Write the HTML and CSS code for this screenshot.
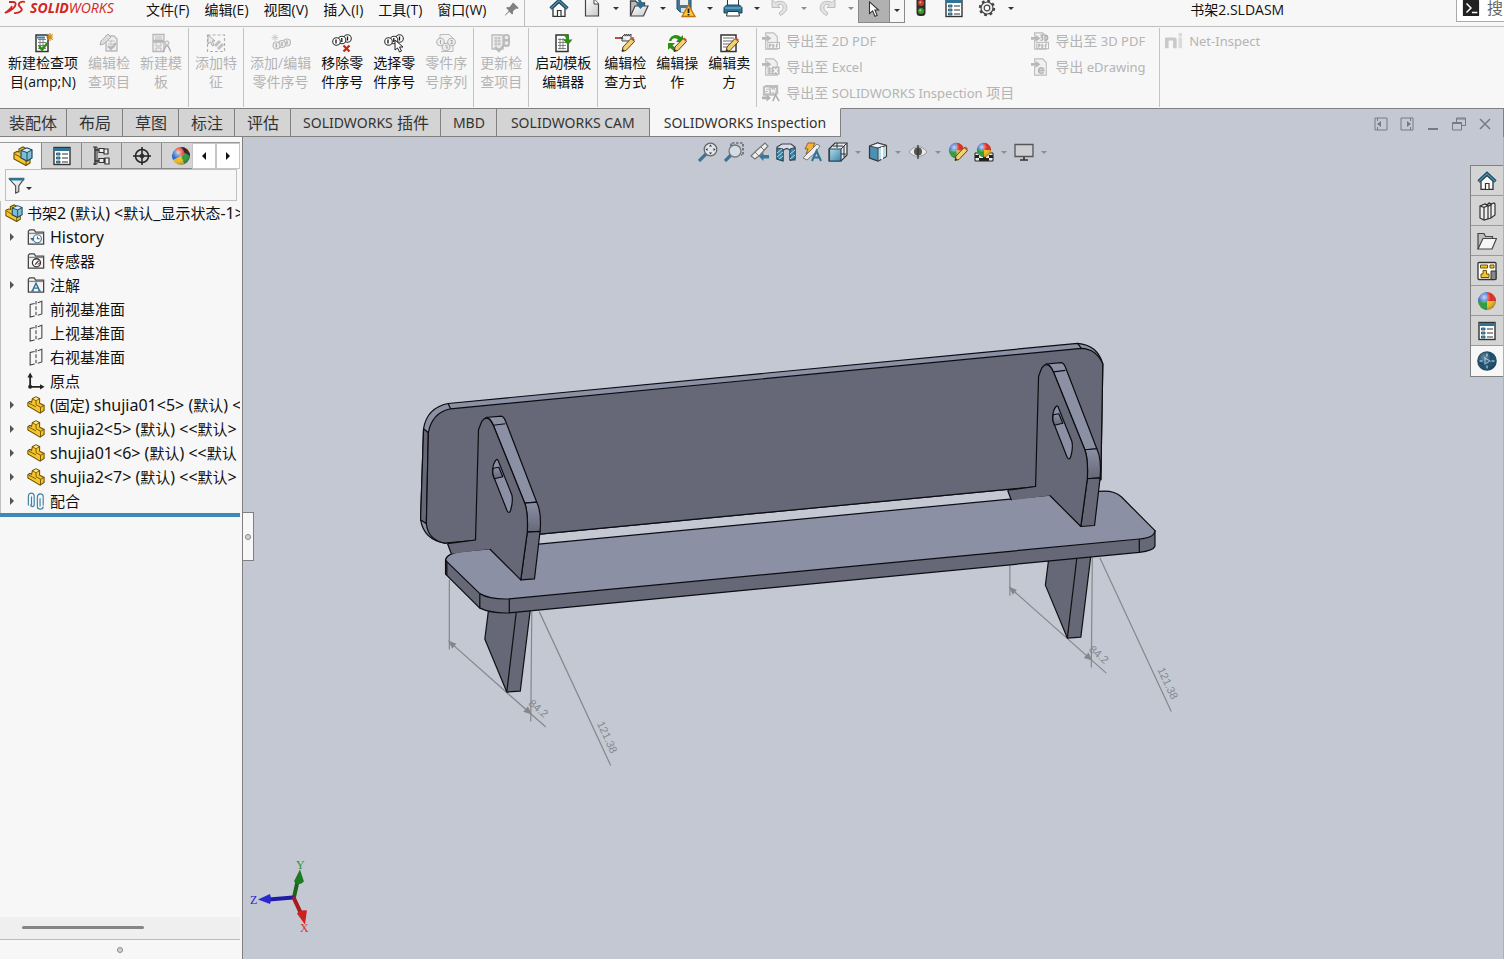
FILE: index.html
```html
<!DOCTYPE html>
<html lang="zh-CN">
<head>
    <meta charset="UTF-8">
    <title>书架2.SLDASM</title>
    <link rel="stylesheet" href="styles.css">
</head>
<body>
    <!-- icon sprite -->
    <svg class="sprite" aria-hidden="true">
        <defs>
            <linearGradient id="steel" x1="0" y1="0" x2="0" y2="1">
                <stop offset="0" stop-color="#8c90a5"/><stop offset="1" stop-color="#666877"/>
            </linearGradient>
            <linearGradient id="blue" x1="0" y1="0" x2="1" y2="1">
                <stop offset="0" stop-color="#b5dcea"/><stop offset="1" stop-color="#3c83a8"/>
            </linearGradient>
            <linearGradient id="paper" x1="0" y1="0" x2="1" y2="1">
                <stop offset="0" stop-color="#fff"/><stop offset="1" stop-color="#c9c9c9"/>
            </linearGradient>
            <radialGradient id="shine" cx=".35" cy=".3" r=".75">
                <stop offset="0" stop-color="#fff" stop-opacity=".75"/><stop offset=".5" stop-color="#fff" stop-opacity="0"/><stop offset="1" stop-color="#000" stop-opacity=".35"/>
            </radialGradient>
        </defs>
        <symbol id="i-home" viewBox="0 0 20 20">
            <path d="M4 10v8.300h12V10l-6-5.500z" fill="#fafafa" stroke="#333" stroke-width="1.300"/>
            <path d="M8.500 18v-5.500h3.500V18" fill="#fff" stroke="#333" stroke-width="1.200"/>
            <path d="M1.500 10.500L10 2.500l8.500 8" fill="none" stroke="#1c4a62" stroke-width="3.200"/>
            <path d="M2 10.300L10 2.800l8 7.500" fill="none" stroke="#4c94b5" stroke-width="1.200"/>
        </symbol>
        <symbol id="i-new" viewBox="0 0 20 20">
            <path d="M3.500 1h8.500l4.500 5v12h-13z" fill="url(#paper)" stroke="#444" stroke-width="1.200"/>
            <path d="M12 1v5h4.500" fill="#fff" stroke="#444"/>
        </symbol>
        <symbol id="i-open" viewBox="0 0 20 20">
            <path d="M1.500 18V3h5l2 2h7v3" fill="#bbb" stroke="#444" stroke-width="1.300"/>
            <path d="M1.500 18L6 8h13l-4.500 10z" fill="url(#paper)" stroke="#444" stroke-width="1.200"/>
            <path d="M8 1c4 0 5 2 5 5h3l-4.500 5L7 6h3c0-2-.5-3-2-5z" fill="#2b6f92"/>
        </symbol>
        <symbol id="i-save" viewBox="0 0 20 20">
            <path d="M1 1h14v13H4l-3-3z" fill="#41799a" stroke="#234a60"/>
            <path d="M4 1h8v6H4z" fill="#eee"/><path d="M5 10h7v4H5z" fill="#ddd"/>
            <path d="M12.500 7L19 18.500H6z" fill="#ffc83a" stroke="#c36f0b" stroke-width="1.300"/>
            <path d="M12.500 10.500v4.500M12.500 16v1.500" stroke="#222" stroke-width="1.800"/>
        </symbol>
        <symbol id="i-print" viewBox="0 0 20 20">
            <path d="M4.500 1h11v8h-11z" fill="#fff" stroke="#333"/>
            <path d="M1 9.500L3.500 7h13L19 9.500V15H1z" fill="#2f7396" stroke="#1c4a62"/>
            <path d="M2 10h16" stroke="#86bdd4"/>
            <path d="M4.500 13.500h11l1 4.500h-13z" fill="#fff" stroke="#333"/>
        </symbol>
        <symbol id="i-undo" viewBox="0 0 20 20">
            <path d="M2 1.500v8h8L7.500 7c4-2 7 1 5 4.500-.8 1.500-2 2.500-3.500 3.500l1.500 2.500C17 14 18 10 16 6.500S9 2.500 5 4.500z" fill="#e2e2e2" stroke="#bdbdbd"/>
        </symbol>
        <symbol id="i-cursor" viewBox="0 0 20 20">
            <path d="M5 1v13l3.500-3 2.500 6 2.500-1-2.500-6h4z" fill="#fff" stroke="#333" stroke-width="1.200"/>
        </symbol>
        <symbol id="i-light" viewBox="0 0 20 20">
            <rect x="5.500" y="-3" width="9" height="21" rx="3.500" fill="#2d2d2d"/>
            <circle cx="10" cy="5" r="3" fill="#d33b28"/><circle cx="10" cy="13" r="3" fill="#3f9a2a"/>
            <circle cx="9.300" cy="4.300" r="1" fill="#f5a090"/><circle cx="9.300" cy="12.300" r="1" fill="#a5dd90"/>
        </symbol>
        <symbol id="i-list" viewBox="0 0 20 20">
            <rect x="2" y="1.500" width="16" height="17" fill="#fff" stroke="#333" stroke-width="1.400"/>
            <path d="M2 2h16v3H2z" fill="#2f7396"/>
            <path d="M4.500 7h3.500v2H4.500zM4.500 11h3.500v2H4.500zM4.500 15h3.500v2H4.500z" fill="#5aa6c6" stroke="#1c4a62" stroke-width=".8"/>
            <path d="M10 8h6M10 12h6M10 16h6" stroke="#333" stroke-width="1.200"/>
        </symbol>
        <symbol id="i-gear" viewBox="0 0 20 20">
            <circle cx="10" cy="10" r="7" fill="none" stroke="#444" stroke-width="2.400" stroke-dasharray="2.750 2.750"/>
            <circle cx="10" cy="10" r="6" fill="#f2f2f2" stroke="#444" stroke-width="1.200"/>
            <circle cx="10" cy="10" r="2.800" fill="#fff" stroke="#444" stroke-width="1.200"/>
        </symbol>
        <symbol id="i-pin" viewBox="0 0 20 20">
            <path d="M11.500 3l6 6-1.500 1-1.500-.5-3.500 3 .2 2.500-1.200 1-3-3L3 17l-1 .5.500-1L6.500 12l-3-3 1-1.200 2.500.2 3-3.500L10 4z" fill="#808080"/>
        </symbol>

        <!-- ribbon icons -->
        <symbol id="i-pencil" viewBox="0 0 20 20">
            <path d="M7 18.500l1-4.500 8-8.500 3.500 3-8.500 9z" fill="#f2cf72" stroke="#5a4216"/>
            <path d="M16 5.500l1.500-1 2 2v2z" fill="#d14a37"/><path d="M7 18.500l.7-2.500 1.800 1.500z" fill="#222"/>
        </symbol>
        <symbol id="i-sheet" viewBox="0 0 20 20">
            <path d="M3 2h12v16.500H3z" fill="#fff" stroke="#333" stroke-width="1.500"/>
            <path d="M5 6.500h8M5 9.500h8M5 12.500h8M5 15.500h8M7 5v11.500M10 5v11.500" stroke="#777" stroke-width=".9"/>
        </symbol>
        <symbol id="i-newsheet" viewBox="0 0 20 20">
            <use href="#i-sheet"/><path d="M4 3.500h8v2H4z" fill="#3b87a9"/>
            <path d="M6 13l3 3.500L14.500 10" fill="none" stroke="#2f8f12" stroke-width="2.500"/>
            <path d="M17 0v8M13 4h8M14.200 1.200l5.600 5.600M19.800 1.200l-5.600 5.600" stroke="#d98a1c" stroke-width="1.200"/>
        </symbol>
        <symbol id="i-g-edit" viewBox="0 0 20 20">
            <path d="M7 3h8l3 3v12H7z" fill="#eee" stroke="#bbb" stroke-width="1.400"/><path d="M9 8h7M9 11h7M9 14h7M12 7v9" stroke="#c4c4c4"/>
            <path d="M1 12l1-4 7-7 3 3-7 7z" fill="#ddd" stroke="#b0b0b0"/><path d="M9 13l3 3 5-6" fill="none" stroke="#b5b5b5" stroke-width="2"/>
        </symbol>
        <symbol id="i-g-template" viewBox="0 0 20 20">
            <path d="M2 1.500h11v6H2zM2 9h11v9.500H2z" fill="#eee" stroke="#b8b8b8" stroke-width="1.300"/><path d="M4 4h7M4 6h7M5 9v4h5V9M5 18v-3h5v3" fill="none" stroke="#bbb"/>
            <circle cx="16" cy="10" r="2" fill="#eee" stroke="#b0b0b0"/><path d="M12 19l3-6h2l3 6" fill="none" stroke="#b0b0b0" stroke-width="1.500"/>
        </symbol>
        <symbol id="i-g-feature" viewBox="0 0 20 20">
            <rect x="1.500" y="2" width="17" height="16.500" fill="none" stroke="#b0b0b0" stroke-width="1.200" stroke-dasharray="3 2"/>
            <path d="M2 2v9l2.500-2 2 4 1.500-1-2-4h3z" fill="#eee" stroke="#aaa"/><path d="M9 13l5-5M12 16l5-5" stroke="#c0c0c0" stroke-width="3"/>
        </symbol>
        <symbol id="i-balloons" viewBox="0 0 20 20">
            <g fill="#fff" stroke="#333" stroke-width="1.100"><circle cx="15.500" cy="5.500" r="3.800"/><circle cx="10" cy="7" r="3.800"/><circle cx="4.500" cy="8.500" r="3.800"/></g>
            <path d="M4 6.500v4M9.800 5v4M15.500 3.500v4" stroke="#111" stroke-width="1.300"/>
        </symbol>
        <symbol id="i-g-balloons" viewBox="0 0 20 20">
            <g fill="#eee" stroke="#b8b8b8" stroke-width="1.100"><circle cx="16" cy="9.500" r="3.500"/><circle cx="11" cy="11" r="3.500"/><circle cx="5.500" cy="12.500" r="3.500"/></g>
            <path d="M5.300 10.500v4M11 9v4M16 7.500v4" stroke="#aaa" stroke-width="1.300"/><path d="M4 1v7M.5 4.500h7M1.500 2l5 5M6.500 2l-5 5" stroke="#ccc"/>
        </symbol>
        <symbol id="i-balloon-del" viewBox="0 0 20 20">
            <use href="#i-balloons"/><path d="M11.500 12.500l6 6M17.500 12.500l-6 6" stroke="#c92a12" stroke-width="2.300"/>
        </symbol>
        <symbol id="i-balloon-sel" viewBox="0 0 20 20">
            <use href="#i-balloons"/><path d="M11 7v10l2.500-2 2 4 2-1-2-4h3.500z" fill="#fff" stroke="#222"/>
        </symbol>
        <symbol id="i-g-seq" viewBox="0 0 20 20">
            <path d="M4 5V1.500h9L17 5v13.500H5" fill="#f2f2f2" stroke="#bbb"/>
            <g fill="#eee" stroke="#b5b5b5" stroke-width="1.100"><circle cx="4.500" cy="9" r="3.800"/><circle cx="15.500" cy="9" r="3.800"/><circle cx="10" cy="14" r="3.800"/></g>
            <path d="M4.500 7v4M9 13c2-2 3 0 1 2h2M14.500 7.500h2l-1 1.500 1 1.500h-2" fill="none" stroke="#aaa"/>
        </symbol>
        <symbol id="i-g-update" viewBox="0 0 20 20">
            <path d="M1 2h11v14H1z" fill="#eee" stroke="#bbb" stroke-width="1.300"/><path d="M3 5h7M3 8h7M3 11h7M5 4v9M8 4v9" stroke="#bbb"/><path d="M4 14l4 4 5-6" fill="none" stroke="#bbb" stroke-width="2.500"/>
            <rect x="12" y="1" width="7" height="13" rx="3" fill="#bbb"/><circle cx="15.500" cy="4.500" r="1.800" fill="#eee"/><circle cx="15.500" cy="10" r="1.800" fill="#eee"/>
        </symbol>
        <symbol id="i-launch" viewBox="0 0 20 20">
            <use href="#i-sheet"/><path d="M9 1.500c5-1 7 1 7 5h3.500L15 12l-5-5.500h3c0-2-1-4-4-5z" fill="#2f8f12"/>
        </symbol>
        <symbol id="i-method" viewBox="0 0 20 20">
            <path d="M7 4l3-3v2l2-2v2l2-2v2l2-2v6l2 1v-4M7 4v4h7" fill="#ddd" stroke="#444"/><path d="M0 5h8" stroke="#333" stroke-width="1.500"/><path d="M1 5h3" stroke="#d14a37" stroke-width="2"/>
            <use href="#i-pencil"/>
        </symbol>
        <symbol id="i-operate" viewBox="0 0 20 20">
            <path d="M2 8C3 2 10 0 14 4l2-2v7H9l2-2.500C8 4.500 5 5 4.500 8zM1 10h7l-2.500 2.500L9 15l-2 3-4-3-2 2z" fill="#2f8f12"/>
            <use href="#i-pencil"/>
        </symbol>
        <symbol id="i-vendor" viewBox="0 0 20 20">
            <path d="M2 2h15v16.500H2z" fill="#fff" stroke="#333" stroke-width="1.500"/><path d="M4 5h11M4 8h11M4 11h8M4 14h5" stroke="#666"/>
            <use href="#i-pencil"/>
        </symbol>
        <symbol id="i-g-export" viewBox="0 0 20 20">
            <path d="M4 9v10h13V5l-4-4H4v4" fill="#f0f0f0" stroke="#bdbdbd" stroke-width="1.200"/>
            <path d="M0 5.500h5V3l5.500 4L5 11V8.500H0z" fill="#b8b8b8"/>
        </symbol>
        <symbol id="i-g-pdf" viewBox="0 0 20 20">
            <use href="#i-g-export"/><rect x="6.500" y="11.500" width="13" height="7" fill="#f6f6f6" stroke="#b5b5b5"/>
            <path d="M8.500 17.500v-4h1.500v2H8.500M12 13.500v4c2 0 2-4 0-4M18 13.500h-2v4M16 15.500h1.500" fill="none" stroke="#aaa"/>
        </symbol>
        <symbol id="i-g-xls" viewBox="0 0 20 20">
            <use href="#i-g-export"/><path d="M6 12h5M6 14.500h5M6 17h5M8 10v8" stroke="#aaa"/>
            <rect x="11" y="9.500" width="8.500" height="9" fill="#bcbcbc"/><path d="M13 11.500l4.500 5M17.500 11.500l-4.500 5" stroke="#fff" stroke-width="1.500"/>
        </symbol>
        <symbol id="i-g-sw" viewBox="0 0 20 20">
            <path d="M1 3l3-2h14v10l-3 2H1z" fill="#bebebe"/><path d="M8 4.500H4v2.500h3.500v2.500H3.500M10 4.500l1 5 1.500-3 1.500 3 1-5" fill="none" stroke="#f5f5f5" stroke-width="1.300"/>
            <path d="M0 14h5v-2.500l5 4-5 4V17H0z" fill="#b3b3b3"/><path d="M12 19l3-7 4 7" fill="none" stroke="#aaa" stroke-width="1.600"/>
        </symbol>
        <symbol id="i-g-3d" viewBox="0 0 20 20">
            <use href="#i-g-pdf"/><path d="M10.500 3.500h3l-2 2.500c3 0 2 4-1 3M15.500 3.500V9.500c4.500 0 4-6 0-6" fill="none" stroke="#aaa" stroke-width="1.200"/>
        </symbol>
        <symbol id="i-g-edr" viewBox="0 0 20 20">
            <use href="#i-g-export"/><path d="M8 14h6c0-4-5.500-4-5.500 0 0 3.500 4 3.500 5.500 2" fill="none" stroke="#b5b5b5" stroke-width="1.800"/>
        </symbol>
        <symbol id="i-g-net" viewBox="0 0 20 20">
            <path d="M0 18V6h10.500q2.500 0 2.500 2.500V18H9v-8.500H4V18z" fill="#c9c9c9"/><path d="M15 6h4v12h-4z" fill="#dadada"/><circle cx="17" cy="3" r="2.200" fill="#dadada"/>
        </symbol>

        <!-- tree and panel icons -->
        <symbol id="i-part" viewBox="0 0 20 20">
            <path d="M1 7.500L3 6l2 1 1-4 4-2 4 2v5l5 2.500V16l-4.500 3L1 11z" fill="#f6c52e" stroke="#6d5200" stroke-width="1.200"/>
            <path d="M6 3l4 2v4.500l5 3L19 10.500M10 5l4-2M15 12.500V19M2 8l8 4" fill="none" stroke="#6d5200"/>
            <path d="M7 3l3-1.500L13 3l-3 1.500z" fill="#ffeaa0"/>
        </symbol>
        <symbol id="i-asm" viewBox="0 0 20 20">
            <path d="M1 7l3-1.500L6 6V3l4-2 4 2v8l3 2v4l-4 2.500L1 13z" fill="#f6c52e" stroke="#6d5200" stroke-width="1.200"/>
            <path d="M2 8l11 6.500V19" fill="none" stroke="#6d5200"/>
            <path d="M8 4.500l6-2.500 5 2v8l-5 3-6-3z" fill="#7fbdd6" stroke="#1c4a62" stroke-width="1.200"/>
            <path d="M8 4.500l6 2 5-2.500M14 6.500V15" fill="none" stroke="#1c4a62"/><path d="M9.500 4.300l4.500-1.700 3.500 1.400-3.500 1.700z" fill="#d9eef5"/>
        </symbol>
        <symbol id="i-folder" viewBox="0 0 20 20">
            <path d="M1.500 18V3.500l1.500-1.500h5l1.500 2.500h9V18z" fill="#f3f3f3" stroke="#444" stroke-width="1.400"/><path d="M2 6h16" stroke="#888" stroke-width="1.500"/>
        </symbol>
        <symbol id="i-history" viewBox="0 0 20 20">
            <use href="#i-folder"/><circle cx="11.500" cy="12" r="4.500" fill="#fff" stroke="#447e9c" stroke-width="1.300"/><path d="M11.500 9.500V12h2.500" fill="none" stroke="#333"/><path d="M3.500 11h5L6 14.500z" fill="#2f7396"/>
        </symbol>
        <symbol id="i-sensor" viewBox="0 0 20 20">
            <use href="#i-folder"/><circle cx="10.500" cy="12" r="4.500" fill="#fff" stroke="#333" stroke-width="1.400"/><path d="M9 14l4-4.500" stroke="#333" stroke-width="1.400"/><path d="M11 14l3.500-3v3z" fill="#d8432f"/>
        </symbol>
        <symbol id="i-note" viewBox="0 0 20 20">
            <use href="#i-folder"/><path d="M6 16.500L10 8l4 8.500M7.500 13.500h5M4.800 16.500h2.800M12.300 16.500h3" fill="none" stroke="#2f7396" stroke-width="1.600"/>
        </symbol>
        <symbol id="i-plane" viewBox="0 0 20 20">
            <path d="M8.500 3.800L3.500 5v14l5-1.300M12 3l4.500-1.500v14L12 17" fill="none" stroke="#444" stroke-width="1.200"/><path d="M10 1v18" stroke="#444" stroke-width="1.200" stroke-dasharray="4 2"/>
        </symbol>
        <symbol id="i-origin" viewBox="0 0 20 20">
            <path d="M3.500 4v12.500H16" fill="none" stroke="#222" stroke-width="2"/><path d="M.5 6l3-5.500 3 5.500zM14.500 13.500l5 3-5 3z" fill="#222"/><circle cx="3.500" cy="16.500" r="2.200" fill="#222"/>
        </symbol>
        <symbol id="i-mate" viewBox="0 0 20 20">
            <path d="M5 5v9.500M1.500 15V5c0-5 6.500-5 6.500 0v9c0 3-4 3-4 0M14.500 7v9M18 15V5c0-4-6.500-4-6.500 1v10c0 4 6.500 4 6.500 0" fill="none" stroke="#3b82a6" stroke-width="1.300"/>
        </symbol>
        <symbol id="i-config" viewBox="0 0 20 20">
            <path d="M3 1v18M3 4h5M3 15h5" fill="none" stroke="#333" stroke-width="1.500"/><path d="M7 2.500h5v4H7zM7 12.500h5v4H7zM12 3h4v5h-4zM13 12h4v6h-4z" fill="#eee" stroke="#333" stroke-width="1.200"/><path d="M1 1h4v17H1" fill="none" stroke="#333"/>
        </symbol>
        <symbol id="i-target" viewBox="0 0 20 20">
            <circle cx="10" cy="10" r="6.500" fill="none" stroke="#222" stroke-width="1.500"/><path d="M10 1v18M1 10h18" stroke="#222" stroke-width="1.500"/><circle cx="10" cy="10" r="2" fill="none" stroke="#222"/>
        </symbol>
        <symbol id="i-ball" viewBox="0 0 20 20">
            <path d="M10 10V1a9 9 0 0 1 9 9z" fill="#db2b1d"/><path d="M10 10h9a9 9 0 0 1-9 9z" fill="#f2b81c"/><path d="M10 10v9a9 9 0 0 1-9-9z" fill="#2c9a3a"/><path d="M10 10H1a9 9 0 0 1 9-9z" fill="#2a64c8"/>
            <circle cx="10" cy="10" r="9" fill="url(#shine)"/>
        </symbol>
        <symbol id="i-ball2" viewBox="0 0 20 20">
            <path d="M10 10L4 3.500a9 9 0 0 1 14 2z" fill="#db2b1d"/><path d="M10 10l8-4.500A9 9 0 0 1 13 18z" fill="#2c9a3a"/><path d="M10 10l3 8a9 9 0 0 1-11-4z" fill="#f2b81c"/><path d="M10 10l-8 4A9 9 0 0 1 4 3.500z" fill="#2a64c8"/>
            <path d="M10 1a9 9 0 0 1 9 9l-5-3z" fill="#222"/><circle cx="10" cy="10" r="9" fill="url(#shine)"/>
        </symbol>
        <symbol id="i-funnel" viewBox="0 0 20 20">
            <path d="M1.500 3.500h16L12 11v6.500L8.500 19v-8z" fill="url(#paper)" stroke="#444" stroke-width="1.200"/><path d="M1 2h17v3H2.500z" fill="#2f7396"/>
        </symbol>

        <!-- heads-up toolbar icons -->
        <symbol id="i-zoomfit" viewBox="0 0 20 20">
            <path d="M1 19l7-7" stroke="#3c7594" stroke-width="3.200"/><circle cx="12.500" cy="7.500" r="6.300" fill="#dfe5ec" stroke="#666" stroke-width="1.300"/>
            <path d="M12.500 2.500l1.500 2h-3zM12.500 12.500l1.500-2h-3zM7.500 7.500l2-1.500v3zM17.500 7.500l-2-1.500v3z" fill="#333"/>
        </symbol>
        <symbol id="i-zoomarea" viewBox="0 0 20 20">
            <path d="M7 4V1h12v12h-2" fill="none" stroke="#444" stroke-width="1.200" stroke-dasharray="2.500 1.500"/><path d="M1 19l6-6" stroke="#3c7594" stroke-width="3.200"/><circle cx="11" cy="9" r="6" fill="#d3dde6" stroke="#777" stroke-width="1.300"/>
        </symbol>
        <symbol id="i-prev" viewBox="0 0 20 20">
            <path d="M1 14l5-5 9-8 3 3-8 9-5 4z" fill="#eee" stroke="#777" stroke-width="1.200"/><path d="M5 10l4 4M11 5l3 3" stroke="#777"/><path d="M9 14.500l4.500-4v2.500H19v3.500h-5.500V19z" fill="#37799b"/>
        </symbol>
        <symbol id="i-section" viewBox="0 0 20 20">
            <path d="M1 5l5-3h9l4 3v13h-5V8l-3-1.500L7 8v11l-6-2z" fill="#dde" stroke="#444" stroke-width="1.200"/><path d="M1 6l6 1v12l-6-2zM14 7l5-1.500V17l-5 1.500z" fill="#3c83a8" stroke="#234a60"/><path d="M1 11l5-4M1 15l6-5M3 17l4-3M14 12l5-4M14 17l5-4" stroke="#b7dbe8"/>
        </symbol>
        <symbol id="i-annot" viewBox="0 0 20 20">
            <path d="M6 1h7l-2 4h3L4 12l2-5H3z" fill="#f6b33b" stroke="#96611b"/><path d="M1 16l8-8 6-6 3 2-5 7-8 7z" fill="#eee" stroke="#777"/><path d="M10 19l4.500-10L19 19M12 15.500h5.500" fill="none" stroke="#2f7396" stroke-width="2"/>
        </symbol>
        <symbol id="i-orient" viewBox="0 0 20 20">
            <path d="M1 7l6-6h12v12l-6 6H1z" fill="#e6e9ef" stroke="#333" stroke-width="1.200"/><path d="M1.500 7H13v12H1.500z" fill="url(#blue)" stroke="#234a60" stroke-width="1.200"/><path d="M13 7l6-6M9 1v5M5 4h10M16 4v11M13 12h5" stroke="#333"/>
        </symbol>
        <symbol id="i-display" viewBox="0 0 20 20">
            <path d="M1.500 4l8-3 9 2.500v11L10 19l-8.500-3z" fill="#4b90b2" stroke="#333" stroke-width="1.200"/><path d="M1.500 4l8-3 9 2.500L10 6z" fill="#eef4f7" stroke="#444"/><path d="M10 6l8.500-2.500v11L10 19z" fill="#b9dbe8" stroke="#444"/><path d="M14 5v12.500" stroke="#fff" stroke-width="2"/>
        </symbol>
        <symbol id="i-eye" viewBox="0 0 20 20">
            <path d="M1 10c5-7 13-7 18 0-5 6-13 6-18 0z" fill="#e9e9e9" stroke="#999"/><circle cx="10" cy="9.500" r="4" fill="#555"/><path d="M10 3v14" stroke="#333" stroke-width="1.300"/>
        </symbol>
        <symbol id="i-appear" viewBox="0 0 20 20">
            <svg width="17" height="17" viewBox="0 0 20 20"><use href="#i-ball"/></svg><use href="#i-pencil"/>
        </symbol>
        <symbol id="i-scene" viewBox="0 0 20 20">
            <path d="M1 11h18v8H1z" fill="#eee" stroke="#222"/><path d="M1 13h4v3H1zM9 14h3v5H9zM5 16h4v3H5zM15 13h4v3h-4zM12 16h3v3h-3z" fill="#222"/><svg x="2" width="16" height="16" viewBox="0 0 20 20"><use href="#i-ball"/></svg>
        </symbol>
        <symbol id="i-monitor" viewBox="0 0 20 20">
            <path d="M1 2.500h18v12H1z" fill="#cfcfd3" stroke="#555" stroke-width="1.300"/><path d="M10 15v3M6 18h8" stroke="#333" stroke-width="1.600"/>
        </symbol>

        <!-- task pane icons -->
        <symbol id="i-books" viewBox="0 0 20 20">
            <path d="M3 5l5-2 2 1 2-2 2 1 3-1 1 1v11l-4 3-7 2-4-2z" fill="#eee" stroke="#333" stroke-width="1.200"/><path d="M3 5l4 1.500V19M7 6.500l4-2V18M11 5.500l3-2V17M8 3l3 1.500M12 2l3 2" fill="none" stroke="#333" stroke-width="1.200"/>
        </symbol>
        <symbol id="i-files" viewBox="0 0 20 20">
            <path d="M1 18V2.500h6l1.500 3h7V8" fill="#bdbdbd" stroke="#444" stroke-width="1.200"/><path d="M1 18L6 7.500h13.500L15 18z" fill="#f6f6f6" stroke="#444" stroke-width="1.200"/>
        </symbol>
        <symbol id="i-palette" viewBox="0 0 20 20">
            <rect x="1" y="1.500" width="18" height="17" rx="1" fill="#fff" stroke="#333" stroke-width="1.300"/><path d="M3.500 4h7v3h-7zM13 4h4v3h-4zM6 9.500h3.500V13H12v3.500H4V13h2z" fill="#f6c52e" stroke="#6d5200"/><path d="M14 10h5v8.500h-5z" fill="#888" stroke="#333"/>
        </symbol>
        <symbol id="i-forum" viewBox="0 0 20 20">
            <circle cx="10" cy="10" r="9.800" fill="#1f4c69"/><path d="M8 7l5 3-5 3z" fill="none" stroke="#7fb4cf" stroke-width="1.200"/><path d="M10 2.500v3M10 14.500v3M2.500 10h3M14.500 10h3" stroke="#8cb9cf" stroke-width="1.500"/><circle cx="10" cy="10" r="9" fill="url(#shine)" opacity=".5"/>
        </symbol>
    </svg>

    <header class="titlebar">
        <div class="logo">
            <svg class="logo-mark" viewBox="0 0 24 16"><path d="M6 2h4c4 0 3 4 0 6.500C7 11 4 12.500 2 13c3-2 6-4.500 7-7M22 2c-4-1-7 1-6 3.500 1 2 4 3 2.500 5S13 13.500 11 13" fill="none" stroke="#d1261f" stroke-width="1.800"/></svg>
            <span class="logo-text"><b>SOLID</b>WORKS</span>
        </div>
        <nav class="menu">
            <button>文件(F)</button><button>编辑(E)</button><button>视图(V)</button><button>插入(I)</button><button>工具(T)</button><button>窗口(W)</button>
        </nav>
        <button class="pin" aria-label="固定"><svg class="icon"><use href="#i-pin"/></svg></button>
        <div class="quick">
            <button class="quick-home" aria-label="主页"><svg class="icon"><use href="#i-home"/></svg></button>
            <div class="split"><button aria-label="新建"><svg class="icon"><use href="#i-new"/></svg></button><button class="caret" aria-label="更多"></button></div>
            <div class="split"><button aria-label="打开"><svg class="icon"><use href="#i-open"/></svg></button><button class="caret" aria-label="更多"></button></div>
            <div class="split"><button aria-label="保存"><svg class="icon"><use href="#i-save"/></svg></button><button class="caret" aria-label="更多"></button></div>
            <div class="split"><button aria-label="打印"><svg class="icon"><use href="#i-print"/></svg></button><button class="caret" aria-label="更多"></button></div>
            <div class="split"><button aria-label="撤销"><svg class="icon"><use href="#i-undo"/></svg></button><button class="caret dim" aria-label="更多"></button></div>
            <div class="split"><button aria-label="重做"><svg class="icon flip"><use href="#i-undo"/></svg></button><button class="caret dim" aria-label="更多"></button></div>
        </div>
        <div class="select-tool"><button class="select-main" aria-label="选择"><svg class="icon"><use href="#i-cursor"/></svg></button><button class="caret" aria-label="更多"></button></div>
        <div class="tools">
            <button aria-label="重建模型"><svg class="icon"><use href="#i-light"/></svg></button>
            <button aria-label="文件属性"><svg class="icon"><use href="#i-list"/></svg></button>
            <div class="split"><button aria-label="选项"><svg class="icon"><use href="#i-gear"/></svg></button><button class="caret" aria-label="更多"></button></div>
        </div>
        <div class="doc-title">书架2.SLDASM</div>
        <label class="search">
            <svg class="icon" viewBox="0 0 20 20"><rect x="1" y="1" width="18" height="18" rx="1" fill="#222"/><path d="M5 5l5 5-5 5M11 15h6" fill="none" stroke="#fff" stroke-width="1.600"/></svg>
            <input type="text" placeholder="搜" aria-label="搜索">
        </label>
    </header>

    <div class="ribbon">
        <div class="group">
            <button class="cmd"><svg class="icon"><use href="#i-newsheet"/></svg>新建检查项<br>目(amp;N)</button>
            <button class="cmd" disabled><svg class="icon"><use href="#i-g-edit"/></svg>编辑检<br>查项目</button>
            <button class="cmd" disabled><svg class="icon"><use href="#i-g-template"/></svg>新建模<br>板</button>
        </div>
        <div class="group">
            <button class="cmd" disabled><svg class="icon"><use href="#i-g-feature"/></svg>添加特<br>征</button>
        </div>
        <div class="group">
            <button class="cmd" disabled><svg class="icon"><use href="#i-g-balloons"/></svg>添加/编辑<br>零件序号</button>
            <button class="cmd"><svg class="icon"><use href="#i-balloon-del"/></svg>移除零<br>件序号</button>
            <button class="cmd"><svg class="icon"><use href="#i-balloon-sel"/></svg>选择零<br>件序号</button>
            <button class="cmd" disabled><svg class="icon"><use href="#i-g-seq"/></svg>零件序<br>号序列</button>
        </div>
        <div class="group">
            <button class="cmd" disabled><svg class="icon"><use href="#i-g-update"/></svg>更新检<br>查项目</button>
        </div>
        <div class="group">
            <button class="cmd"><svg class="icon"><use href="#i-launch"/></svg>启动模板<br>编辑器</button>
        </div>
        <div class="group">
            <button class="cmd"><svg class="icon"><use href="#i-method"/></svg>编辑检<br>查方式</button>
            <button class="cmd"><svg class="icon"><use href="#i-operate"/></svg>编辑操<br>作</button>
            <button class="cmd"><svg class="icon"><use href="#i-vendor"/></svg>编辑卖<br>方</button>
        </div>
        <div class="group exports">
            <button class="export" disabled><svg class="icon"><use href="#i-g-pdf"/></svg><span>导出至 <span class="lat">2D PDF</span></span></button>
            <button class="export" disabled><svg class="icon"><use href="#i-g-xls"/></svg><span>导出至 <span class="lat">Excel</span></span></button>
            <button class="export" disabled><svg class="icon"><use href="#i-g-sw"/></svg><span>导出至 <span class="lat">SOLIDWORKS Inspection</span> 项目</span></button>
            <button class="export" disabled><svg class="icon"><use href="#i-g-3d"/></svg><span>导出至 <span class="lat">3D PDF</span></span></button>
            <button class="export" disabled><svg class="icon"><use href="#i-g-edr"/></svg><span>导出 <span class="lat">eDrawing</span></span></button>
        </div>
        <div class="net">
            <button class="export" disabled><svg class="icon"><use href="#i-g-net"/></svg><span class="lat">Net-Inspect</span></button>
        </div>
    </div>

    <div class="tabrow">
        <div class="tabs">
            <button class="tab first">装配体</button>
            <button class="tab">布局</button>
            <button class="tab">草图</button>
            <button class="tab">标注</button>
            <button class="tab">评估</button>
            <button class="tab"><span class="lat">SOLIDWORKS</span> 插件</button>
            <button class="tab"><span class="lat">MBD</span></button>
            <button class="tab wide"><span class="lat">SOLIDWORKS CAM</span></button>
            <button class="tab wide active"><span class="lat">SOLIDWORKS Inspection</span></button>
        </div>
        <div class="window-controls">
            <button aria-label="左窗格"><svg class="wicon" viewBox="0 0 14 14"><path d="M1 1h12v12H1zM3.500 1v3M3.500 10v3" /><path class="solid" d="M7 4v6L3 7z"/></svg></button>
            <button aria-label="右窗格"><svg class="wicon" viewBox="0 0 14 14"><path d="M1 1h12v12H1zM10.500 1v3M10.500 10v3"/><path class="solid" d="M7 4v6l4-3z"/></svg></button>
            <button aria-label="最小化"><svg class="wicon" viewBox="0 0 14 14"><path d="M2 12h10" stroke-width="2"/></svg></button>
            <button aria-label="还原"><svg class="wicon" viewBox="0 0 14 14"><path d="M4.500 5V1h9v7.500h-4M.5 5.500h9V13h-9zM4.500 2h9M.5 6.500h9"/></svg></button>
            <button aria-label="关闭"><svg class="wicon" viewBox="0 0 14 14"><path d="M2 2l10 10M12 2L2 12" stroke-width="1.500"/></svg></button>
        </div>
    </div>

    <main class="workspace">
        <aside class="panel">
            <div class="panel-tabs">
                <button class="ptab active" aria-label="设计树"><svg class="icon"><use href="#i-asm"/></svg></button>
                <button class="ptab" aria-label="属性"><svg class="icon"><use href="#i-list"/></svg></button>
                <button class="ptab" aria-label="配置"><svg class="icon"><use href="#i-config"/></svg></button>
                <button class="ptab" aria-label="尺寸"><svg class="icon"><use href="#i-target"/></svg></button>
                <button class="ptab last" aria-label="外观"><svg class="icon"><use href="#i-ball2"/></svg></button>
                <button class="pscroll" aria-label="向左"><i class="arrow-left"></i></button>
                <button class="pscroll" aria-label="向右"><i class="arrow-right"></i></button>
            </div>
            <div class="filter">
                <button class="filter-btn" aria-label="过滤器"><svg class="icon"><use href="#i-funnel"/></svg><i class="caret-mark"></i></button>
                <input type="text" aria-label="过滤">
            </div>
            <ul class="tree">
                <li class="root"><svg class="icon"><use href="#i-asm"/></svg><span>书架<span class="lat">2 (</span>默认<span class="lat">) &lt;</span>默认<span class="lat">_</span>显示状态<span class="lat">-1&gt;</span></span></li>
                <li><i class="arrow-right"></i><svg class="icon"><use href="#i-history"/></svg><span class="lat">History</span></li>
                <li><i></i><svg class="icon"><use href="#i-sensor"/></svg><span>传感器</span></li>
                <li><i class="arrow-right"></i><svg class="icon"><use href="#i-note"/></svg><span>注解</span></li>
                <li><i></i><svg class="icon"><use href="#i-plane"/></svg><span>前视基准面</span></li>
                <li><i></i><svg class="icon"><use href="#i-plane"/></svg><span>上视基准面</span></li>
                <li><i></i><svg class="icon"><use href="#i-plane"/></svg><span>右视基准面</span></li>
                <li><i></i><svg class="icon"><use href="#i-origin"/></svg><span>原点</span></li>
                <li><i class="arrow-right"></i><svg class="icon"><use href="#i-part"/></svg><span><span class="lat">(</span>固定<span class="lat">) shujia01&lt;5&gt; (</span>默认<span class="lat">) &lt;</span></span></li>
                <li><i class="arrow-right"></i><svg class="icon"><use href="#i-part"/></svg><span><span class="lat">shujia2&lt;5&gt; (</span>默认<span class="lat">) &lt;&lt;</span>默认<span class="lat">&gt;</span></span></li>
                <li><i class="arrow-right"></i><svg class="icon"><use href="#i-part"/></svg><span><span class="lat">shujia01&lt;6&gt; (</span>默认<span class="lat">) &lt;&lt;</span>默认</span></li>
                <li><i class="arrow-right"></i><svg class="icon"><use href="#i-part"/></svg><span><span class="lat">shujia2&lt;7&gt; (</span>默认<span class="lat">) &lt;&lt;</span>默认<span class="lat">&gt;</span></span></li>
                <li><i class="arrow-right"></i><svg class="icon"><use href="#i-mate"/></svg><span>配合</span></li>
            </ul>
            <div class="rollback"></div>
            <div class="hscroll"><div class="thumb"></div></div>
            <div class="panel-foot"><i class="grip"></i></div>
        </aside>

        <section class="viewport">
            <svg class="scene" viewBox="243 137 1261 822" preserveAspectRatio="xMinYMin meet">
                <defs>
                    <g id="dims" fill="none" stroke="#85878a" stroke-width="1.200">
                        <path d="M449.500 580V650M532 612L531 722M449.500 642L546 727.500M539.500 612L611 766"/>
                        <path d="M449.500 642l6 2.500-3 3.500zM531 714l-3-6-3.500 4z" fill="#85878a"/>
                        <text class="dim" transform="translate(528 705) rotate(40)">84.2</text>
                        <text class="dim" transform="translate(597 724) rotate(65)">121.38</text>
                    </g>
                    <g id="leg" fill="#666877" stroke="#111" stroke-width="1.200" stroke-linejoin="round">
                        <path d="M489 608L485 639.500L507 692.500L520.500 691.500L531 606z"/><path d="M517 608L507 692.500"/>
                    </g>
                    <g id="support" stroke="#0c0c10" stroke-width="1.200" stroke-linejoin="round">
                        <path d="M486 417.700L501.500 416.300Q504.500 417 506 422L537 502.500L525 503.500L493.700 426Q490 417 486 417.700z" fill="#8c90a5"/>
                        <path d="M537 502.500Q542 513 540.300 531.700L527.500 532.500Q528.500 513 525 503.500z" fill="url(#steel)"/>
                        <path d="M540.300 531.700L534.700 579.300L521 580.300L527.500 532.500z" fill="#666877"/>
                        <path d="M475.700 540.300L478.700 430L482 421.500Q488 413.500 493.700 426L525 503.500Q528.500 513 527.500 532.500L521 580.300L490 549.300L451.500 554L447.700 544z" fill="#666877" stroke="none"/>
                        <path d="M447.700 544L475.700 540.300L478.700 430L482 421.500Q488 413.500 493.700 426L525 503.500Q528.500 513 527.500 532.500L521 580.300L490 549.300M447.700 544L451.500 554M493.700 425.500L505.500 424" fill="none"/>
                        <path d="M496.700 459.700Q493 463 492.700 472Q493 476 494.700 479L507.300 511Q509.500 515 511 510Q513.500 501 512 495L499 462.500Q498 459 496.700 459.700z" fill="#8c90a5"/>
                        <path d="M493.500 468.500L499 467.500L503 477L494.700 479Q492 473 493.500 468.500z" fill="url(#steel)"/>
                    </g>
                </defs>
                <use href="#dims"/><use href="#dims" x="561" y="-54"/>
                <use href="#leg"/><use href="#leg" x="561" y="-54"/>
                <g stroke="#0c0c10" stroke-width="1.200" stroke-linejoin="round">
                    <!-- back board -->
                    <path d="M423.700 429Q427 408 448.300 403.700L1078.300 343.500Q1098 345 1103.500 364L1101.500 480L1036 487L540 534.500L475.700 540.300L445 543.500Q424 540 420.700 520z" fill="#8c90a5"/>
                    <path d="M423.700 429L428.500 433L426.500 524L420.700 520z" fill="#666877"/>
                    <path d="M428.500 433Q432 413 450.700 409L1082 348.500Q1097 349 1103.500 364L1101.500 480L1036 487L540 534.500L445 543.500Q428 540 426.500 524z" fill="#666877"/>
                    <path d="M448.300 403.700L450.700 409M1078.300 343.500L1082 348.500"/>
                    <!-- seat -->
                    <path d="M445.700 560V574.500L480 608.500Q492 614 509.500 613.300L1140 552.700Q1154 551 1155.700 546.500V531z" fill="#666877"/>
                    <path d="M445.700 560Q447 554 462 551.700L539 544.500L1050.700 495.500L1100 491.700Q1114 490 1122 497L1155.700 531Q1155 538 1140 539.300L509.500 599.300Q490 600 480 594L447 562z" fill="#8c90a5"/>
                    <path d="M447 562V575.500M480 594V608.500M509.500 599.300V613.300M1140 539.300V552.700"/>
                </g>
                <use href="#support"/><use href="#support" x="560.500" y="-53.500"/>
                <!-- axis triad -->
                <g stroke-width="4" stroke-linecap="round">
                    <path d="M294 898l4-18" stroke="#1c641c"/><path d="M293 898l-24 2" stroke="#1c1ca6"/><path d="M294 899l7 15" stroke="#a61c1c"/>
                </g>
                <path d="M300 870l4 12q-5 5-10 0z" fill="#1d7a20"/><path d="M258 900l12-5.500q2 5 0 10z" fill="#2929cf"/><path d="M305 925l-8-11q4-4 10-3z" fill="#cf2020"/>
                <text class="axis" x="296" y="870" fill="#2a952c">Y</text>
                <text class="axis" x="250" y="905" fill="#2828cc">Z</text>
                <text class="axis" x="300" y="933" fill="#dc2c2c">X</text>
            </svg>
            <div class="hud">
                <button aria-label="整屏显示"><svg class="icon"><use href="#i-zoomfit"/></svg></button>
                <button aria-label="局部放大"><svg class="icon"><use href="#i-zoomarea"/></svg></button>
                <button aria-label="上一视图"><svg class="icon"><use href="#i-prev"/></svg></button>
                <button aria-label="剖面视图"><svg class="icon"><use href="#i-section"/></svg></button>
                <button aria-label="动态注解"><svg class="icon"><use href="#i-annot"/></svg></button>
                <button aria-label="视图定向"><svg class="icon"><use href="#i-orient"/></svg></button><button class="caret dim" aria-label="更多"></button>
                <button aria-label="显示样式"><svg class="icon"><use href="#i-display"/></svg></button><button class="caret dim" aria-label="更多"></button>
                <button aria-label="隐藏显示"><svg class="icon"><use href="#i-eye"/></svg></button><button class="caret dim" aria-label="更多"></button>
                <button aria-label="编辑外观"><svg class="icon"><use href="#i-appear"/></svg></button>
                <button aria-label="应用布景"><svg class="icon"><use href="#i-scene"/></svg></button><button class="caret dim" aria-label="更多"></button>
                <button aria-label="视图设置"><svg class="icon"><use href="#i-monitor"/></svg></button><button class="caret dim" aria-label="更多"></button>
            </div>
            <button class="panel-handle" aria-label="折叠面板"><i class="grip"></i></button>
            <div class="taskpane">
                <button aria-label="资源"><svg class="icon"><use href="#i-home"/></svg></button>
                <button aria-label="设计库"><svg class="icon"><use href="#i-books"/></svg></button>
                <button aria-label="文件探索器"><svg class="icon"><use href="#i-files"/></svg></button>
                <button aria-label="视图调色板"><svg class="icon"><use href="#i-palette"/></svg></button>
                <button aria-label="外观布景"><svg class="icon"><use href="#i-ball"/></svg></button>
                <button aria-label="自定义属性"><svg class="icon"><use href="#i-list"/></svg></button>
                <button class="active" aria-label="论坛"><svg class="icon"><use href="#i-forum"/></svg></button>
            </div>
        </section>
    </main>
</body>
</html>
```
FILE: styles.css
```css
* { box-sizing: border-box; }
body { margin: 0; height: 100vh; display: flex; flex-direction: column; overflow: hidden; background: #f7f7f7; color: #111; font: 14px/20px "Open Sans", "Noto Sans CJK SC", sans-serif; }
button { margin: 0; padding: 0; border: 0; background: none; color: inherit; font: inherit; display: flex; align-items: center; justify-content: center; }
input { min-width: 0; border: 0; padding: 0; background: none; outline: none; font: inherit; }
ul { list-style: none; margin: 0; padding: 0; }
.sprite { position: absolute; width: 0; height: 0; }
.icon { width: 18px; height: 18px; flex: none; display: block; }
.flip { transform: scaleX(-1); }
.lat { font-family: "Noto Sans", "Noto Sans CJK SC", sans-serif; font-size: 13px; }

/* title bar */
.titlebar { flex: none; display: flex; align-items: flex-end; height: 27px; border-bottom: 1px solid #bdbdbd; overflow: hidden; }
.titlebar > * { padding-bottom: 8px; }
.titlebar button { height: 20px; flex: none; }
.logo { width: 146px; display: flex; align-items: center; gap: 3px; padding-left: 3px; color: #d1261f; line-height: 16px; }
.titlebar .logo { padding-bottom: 10px; }
.logo-mark { width: 24px; height: 16px; }
.logo-text { font-style: italic; }
.menu { display: flex; gap: 15px; }
.titlebar .menu button { height: 16px; line-height: 16px; }
.titlebar .pin { width: 39px; height: 27px; padding-left: 14px; border-right: 1px solid #bdbdbd; }
.quick { display: flex; padding-left: 22px; gap: 4px; }
.quick button, .tools button { width: 24px; }
.quick-home { margin-right: 5px; }
.quick .icon, .tools .icon { width: 20px; height: 20px; }
.split { display: flex; gap: 4px; }
.titlebar .caret { width: 15px; }
.caret::after, .caret-mark { content: ""; border: 3px solid transparent; border-top-color: #333; border-bottom: 0; }
.caret.dim::after { border-top-color: #8b8d92; }
.titlebar .select-tool { display: flex; padding: 0 0 3px; }
.select-tool button { height: 30px; border: 1px solid #8a8a8a; padding-top: 4px; }
.select-tool .caret { border-left: 0; }
.select-main { width: 32px; background: #b1b1b1; }
.tools { display: flex; gap: 9px; padding-left: 4px; }
.doc-title { flex: 1; text-align: center; line-height: 16px; }
.titlebar .search { width: 48px; height: 26px; margin-bottom: 4px; padding: 0 0 2px 5px; display: flex; align-items: center; gap: 7px; overflow: hidden; background: #fff; border: 1px solid #aaa; border-right: 0; }
.search input { flex: 1; font-size: 16px; }
.search input::placeholder { color: #666; }

/* ribbon */
.ribbon { flex: none; display: flex; height: 81px; padding: 1px 0; }
.group { display: flex; align-items: flex-start; padding: 0 1px; border-right: 1px solid #c3c3c3; }
.group:first-child { padding-left: 3px; }
.cmd { display: block; padding: 5px 5px 0; line-height: 19px; text-align: center; white-space: nowrap; }
.cmd .icon { width: 20px; height: 20px; margin: 0 auto; }
.cmd:disabled, .export:disabled { color: #b4b4b4; }
.exports { display: grid; grid-template-rows: repeat(3, 26px); grid-auto-flow: column; grid-template-columns: 269px 133px; padding: 0; }
.export { justify-content: flex-start; gap: 6px; padding-left: 5px; height: 26px; white-space: nowrap; }

/* command tabs */
.tabrow { flex: none; display: flex; height: 29px; }
.tabs { display: flex; background: #f7f7f7; }
.tab { height: 29px; padding: 0 11px 0 12px; background: #d4d4d4; border: solid #808080; border-width: 1px 1px 1px 0; font-size: 16px; color: #333; white-space: pre; }
.tab .lat { font-size: 14px; }
.tab.first { padding: 0 9px; }
.tab.wide { padding: 0 14px; }
.tab.active { background: #f7f7f7; border-top-color: #f7f7f7; }
.window-controls { flex: 1; display: flex; justify-content: flex-end; padding-right: 5px; background: #c4c8d3; border: solid #808080; border-width: 1px 1px 0 0; }
.window-controls button { width: 26px; padding-top: 2px; }
.wicon { width: 14px; height: 14px; fill: none; stroke: #777a80; }
.wicon .solid { fill: #777a80; stroke: none; }

/* workspace */
.workspace { flex: 1; min-height: 0; display: flex; }
.panel { flex: none; width: 243px; display: flex; flex-direction: column; border-right: 1px solid #808080; padding-right: 2px; }
.panel-tabs { display: flex; height: 27px; margin-top: 5px; border-top: 1px solid #999; }
.ptab { width: 40px; background: #d4d4d4; border-right: 1px solid #888; border-bottom: 1px solid #888; }
.ptab.active { width: 42px; background: #f7f7f7; border-bottom: 0; padding-left: 4px; }
.ptab.last { flex: 1; border-right: 0; padding-left: 8px; }
.panel-tabs .icon { width: 20px; height: 20px; }
.pscroll { width: 24px; background: #fff; border: 1px solid #c6c6c6; }
.arrow-right, .arrow-left { border: 4px solid transparent; }
.arrow-right { border-left-color: #111; border-right: 0; }
.arrow-left { border-right-color: #111; border-left: 0; }
.filter { display: flex; height: 32px; margin: 0 3px 0 5px; border: 1px solid #c0c0c0; }
.filter-btn { padding-left: 2px; }
.filter-btn .caret-mark { margin-top: 6px; }
.filter input { flex: 1; }
.tree { border-left: 1px solid #c0c0c0; overflow: hidden; font-size: 15px; }
.tree li { display: flex; align-items: center; height: 24px; white-space: pre; }
.tree .lat { font-size: 16px; }
.tree li > i { width: 4px; margin: 0 13px 0 9px; }
.tree li > .arrow-right { border-left-color: #555; }
.tree li .icon { margin-right: 5px; }
.tree .root .icon { margin: 0 4px; }
.rollback { height: 4px; background: #3e8ab6; }
.hscroll { margin-top: auto; height: 22px; padding: 9px 0 0 22px; background: #efefef; }
.thumb { width: 122px; height: 3px; border-radius: 2px; background: #868686; }
.panel-foot { height: 20px; display: flex; align-items: center; justify-content: center; border-top: 1px solid #bbb; }
.grip { width: 6px; height: 6px; border-radius: 50%; border: 1px solid #888; background: #d4d4d4; }

/* graphics area */
.viewport { flex: 1; min-width: 0; position: relative; background: #c4c8d3; border-right: 1px solid #aeb0b6; }
.scene { position: absolute; left: 0; top: 0; width: 100%; height: 100%; }
.dim { font: 11px "Liberation Sans", sans-serif; fill: #85878a; stroke: none; }
.axis { font: 12px "Liberation Serif", serif; }
.hud { position: relative; display: flex; justify-content: center; padding-top: 6px; }
.hud button { width: 26px; height: 18px; }
.hud .caret { width: 14px; }
.hud .icon { width: 20px; height: 20px; }
.panel-handle { position: absolute; left: 0; top: 375px; width: 11px; height: 49px; background: #f7f7f7; border: 1px solid #808080; border-left: 0; }
.taskpane { position: absolute; right: 0; top: 28px; border: 1px solid #808080; border-right: 0; }
.taskpane button { width: 32px; height: 30px; background: #d4d4d4; border-bottom: 1px solid #999; }
.taskpane .icon { width: 20px; height: 20px; }
.taskpane .active { background: #f7f7f7; border-bottom: 0; }
```
